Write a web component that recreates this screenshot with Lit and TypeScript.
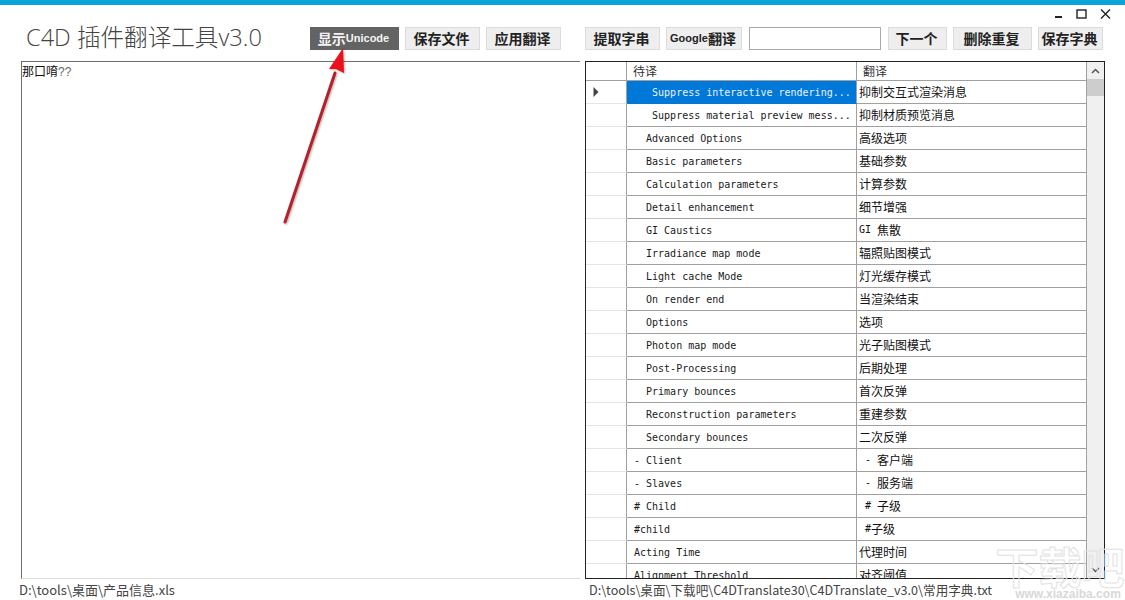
import { LitElement, html, css, svg } from "lit";
import { customElement } from "lit/decorators.js";

const ROWS: [string, string][] = [
  ["   Suppress interactive rendering...", "抑制交互式渲染消息"],
  ["   Suppress material preview mess...", "抑制材质预览消息"],
  ["  Advanced Options", "高级选项"],
  ["  Basic parameters", "基础参数"],
  ["  Calculation parameters", "计算参数"],
  ["  Detail enhancement", "细节增强"],
  ["  GI Caustics", "GI 焦散"],
  ["  Irradiance map mode", "辐照贴图模式"],
  ["  Light cache Mode", "灯光缓存模式"],
  ["  On render end", "当渲染结束"],
  ["  Options", "选项"],
  ["  Photon map mode", "光子贴图模式"],
  ["  Post-Processing", "后期处理"],
  ["  Primary bounces", "首次反弹"],
  ["  Reconstruction parameters", "重建参数"],
  ["  Secondary bounces", "二次反弹"],
  ["- Client", " - 客户端"],
  ["- Slaves", " - 服务端"],
  ["# Child", " # 子级"],
  ["#child", " #子级"],
  ["Acting Time", "代理时间"],
  ["Alignment Threshold", "对齐阈值"],
];

const mixed = (s: string) =>
  s.split(/([\x20-\x7e]+)/).filter(Boolean).map((part) =>
    /^[\x20-\x7e]/.test(part) ? html`<span class="m">${part}</span>` : html`<span>${part}</span>`
  );

@customElement("app-root")
export class AppRoot extends LitElement {
  static styles = css`
    :host {
      display: block;
      width: 1125px;
      height: 600px;
      position: relative;
      overflow: hidden;
      background: #fff;
      font-family: "Noto Sans CJK SC", "Liberation Sans", sans-serif;
      color: #111;
    }
    .topbar { height: 5px; background: #0aa5d8; }
    .head { height: 56px; display: flex; align-items: flex-start; box-sizing: border-box; }
    .title {
      width: 284px;
      margin: 16px 0 0 26px;
      font-family: "Open Sans", "Noto Sans CJK SC", sans-serif;
      font-weight: 300;
      font-size: 23.6px;
      line-height: 32px;
      color: #444;
      white-space: nowrap;
    }
    .btns { display: flex; gap: 6px; margin-top: 22px; }
    .btn {
      height: 23px;
      box-sizing: border-box;
      border: 1px solid #dcdcdc;
      background: #eeeeee;
      font-size: 14px;
      font-weight: 700;
      color: #222;
      display: flex;
      align-items: center;
      justify-content: center;
      white-space: nowrap;
      padding: 0 2px 2px 0;
    }
    .btn.dark { background: #636363; border-color: #636363; color: #f4f4f4; }
    .latin { font-family: "Liberation Sans", sans-serif; font-size: 11px; }
    .gap24 { margin-left: 18px; }
    .input { height: 23px; box-sizing: border-box; width: 132px; border: 1px solid #aaa; background: #fff; margin: 0 1px; }
    .win {
      position: absolute;
      top: 9px;
      right: 14px;
      display: flex;
      gap: 13px;
      align-items: center;
    }
    .win svg { display: block; }
    .main { height: 518px; display: flex; align-items: stretch; }
    .left {
      margin-left: 21px;
      width: 559px;
      box-sizing: border-box;
      border-top: 1px solid #6e6e6e;
      border-left: 1px solid #6e6e6e;
      border-bottom: 1px solid #dcdcdc;
      font-size: 12px;
      line-height: 17px;
      color: #111;
    }
    .q { font-family: "Liberation Sans", sans-serif; color: #666; }
    .grid {
      margin-left: 5px;
      width: 520px;
      box-sizing: border-box;
      border: 1px solid #222;
      display: flex;
      overflow: hidden;
    }
    .cells { width: 501px; flex: none; overflow: hidden; }
    .row { display: grid; grid-template-columns: 41px 230px 230px; height: 23px; }
    .row.h { height: 19px; }
    .c {
      box-sizing: border-box;
      border-right: 1px solid #a0a0a0;
      border-bottom: 1px solid #a0a0a0;
      overflow: hidden;
      white-space: pre;
      display: flex;
      align-items: center;
    }
    .c.rh { border-bottom-color: #e4e4e4; justify-content: center; }
    .row.h .c.rh { border-bottom-color: #a0a0a0; }
    .c.a {
      padding-left: 7px;
      font-family: "DejaVu Sans Mono", "Liberation Mono", monospace;
      font-size: 10px;
      color: #1a1a1a;
    }
    .c.b { padding: 0 0 2px 2px; font-size: 12px; color: #111; }
    .m { font-family: "DejaVu Sans Mono", "Liberation Mono", monospace; font-size: 10px; }
    .h .c { font-size: 12px; padding: 0 0 2px 6px; color: #333; }
    .c.sel { background: #0078d7; color: #e8f2fb; border-bottom-color: #0078d7; }
    .sb {
      flex: 1;
      background: #f0f0f0;
      display: flex;
      flex-direction: column;
      position: relative;
    }
    .sb .up { height: 17px; display: flex; align-items: center; justify-content: center; }
    .sb .thumb { height: 17px; background: #cdcdcd; }
    .sb .down { position: absolute; bottom: 0; left: 0; right: 0; height: 17px; display: flex; align-items: center; justify-content: center; }
    .status {
      height: 21px;
      display: flex;
      font-size: 13px;
      line-height: 22px;
      color: #444;
      white-space: nowrap;
    }
    .status span:first-child { margin-left: 19px; width: 570px; }
    .status span:last-child { font-size: 12.6px; }
    .wm {
      position: absolute;
      left: 995px;
      top: 541px;
      width: 130px;
      text-align: center;
      pointer-events: none;
    }
    .wm .big {
      font-size: 43px;
      line-height: 48px;
      font-weight: 700;
      color: transparent;
      -webkit-text-stroke: 1px #e2e2e2;
      white-space: nowrap;
    }
    .wm .url {
      font-size: 12px;
      line-height: 10px;
      font-weight: 700;
      color: #d8d8d8;
      font-family: "Liberation Sans", sans-serif;
      padding-left: 16px;
    }
    .arrow { position: absolute; left: 270px; top: 40px; pointer-events: none; overflow: visible; filter: drop-shadow(1px 1px 1px rgba(90, 70, 70, 0.45)); }
  `;

  render() {
    return html`
      <div class="topbar"></div>
      <div class="head">
        <div class="title">C4D 插件翻译工具v3.0</div>
        <div class="btns">
          <div class="btn dark" style="width:89px">显示<span class="latin">Unicode</span></div>
          <div class="btn" style="width:75px">保存文件</div>
          <div class="btn" style="width:75px">应用翻译</div>
          <div class="btn gap24" style="width:75px">提取字串</div>
          <div class="btn" style="width:76px"><span class="latin">Google</span>翻译</div>
          <div class="input"></div>
          <div class="btn" style="width:59px">下一个</div>
          <div class="btn" style="width:79px">删除重复</div>
          <div class="btn" style="width:65px">保存字典</div>
        </div>
      </div>
      <div class="win">
        <svg width="10" height="10" viewBox="0 0 10 10"><rect x="2" y="7" width="7" height="2" fill="#222"></rect></svg>
        <svg width="11" height="10" viewBox="0 0 11 10"><rect x="1" y="1" width="9" height="8" fill="none" stroke="#222" stroke-width="1.4"></rect></svg>
        <svg width="11" height="10" viewBox="0 0 11 10"><path d="M1 0.5 L10 9.5 M10 0.5 L1 9.5" stroke="#222" stroke-width="1.4" fill="none"></path></svg>
      </div>
      <div class="main">
        <div class="left">那口唷<span class="q">??</span></div>
        <div class="grid">
          <div class="cells">
            <div class="row h">
              <div class="c rh"></div>
              <div class="c">待译</div>
              <div class="c">翻译</div>
            </div>
            ${ROWS.map(
              ([a, b], i) => html`
                <div class="row">
                  <div class="c rh">
                    ${i === 0
                      ? svg`<svg width="6" height="10" viewBox="0 0 6 10" style="margin-right:20px"><path d="M0.5 0 L5.5 5 L0.5 10 Z" fill="#444"></path></svg>`
                      : ""}
                  </div>
                  <div class="c a ${i === 0 ? "sel" : ""}">${a}</div>
                  <div class="c b">${mixed(b)}</div>
                </div>
              `
            )}
          </div>
          <div class="sb">
            <div class="up"><svg width="9" height="6" viewBox="0 0 9 6"><path d="M1 5 L4.5 1.5 L8 5" fill="none" stroke="#555" stroke-width="1.5"></path></svg></div>
            <div class="thumb"></div>
            <div class="down"><svg width="9" height="6" viewBox="0 0 9 6"><path d="M1 1 L4.5 4.5 L8 1" fill="none" stroke="#555" stroke-width="1.5"></path></svg></div>
          </div>
        </div>
      </div>
      <div class="status">
        <span>D:\\tools\\桌面\\产品信息.xls</span>
        <span>D:\\tools\\桌面\\下载吧\\C4DTranslate30\\C4DTranslate_v3.0\\常用字典.txt</span>
      </div>
      <svg class="arrow" width="80" height="190" viewBox="0 0 80 190">
        <path d="M15 182 L65 33" stroke="#b5202b" stroke-width="3" stroke-linecap="round" fill="none"></path>
        <path d="M73 8 L74 33 L66 29 L59 29 Z" fill="#ec0f1c"></path>
      </svg>
      <div class="wm">
        <div class="big">下载吧</div>
        <div class="url">www.xiazaiba.com</div>
      </div>
    `;
  }
}
